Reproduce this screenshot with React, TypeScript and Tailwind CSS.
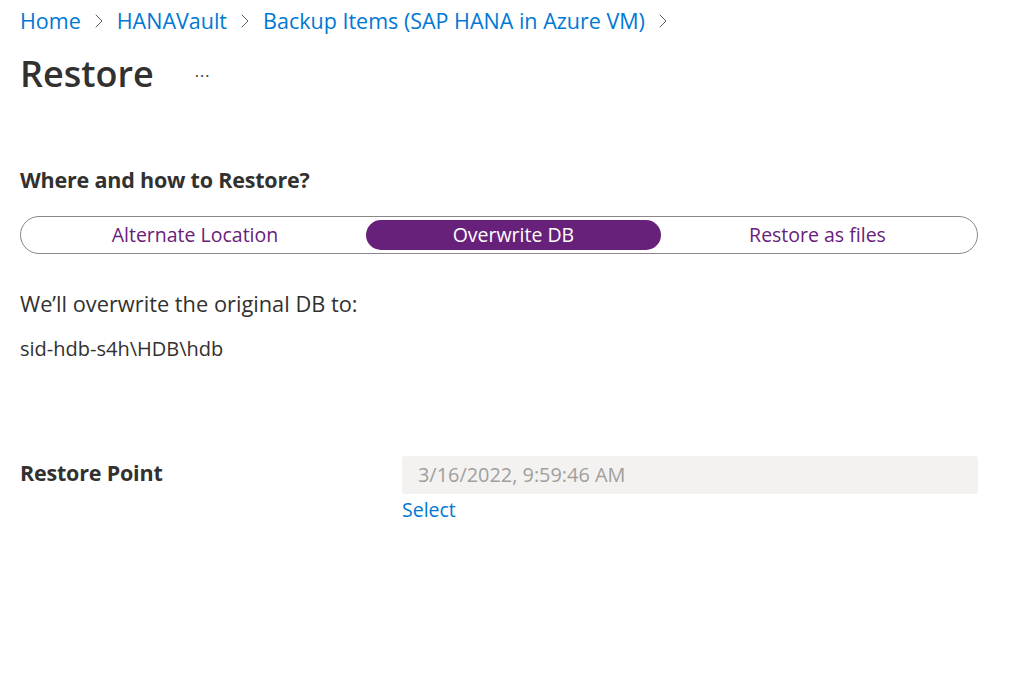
import { ChevronRight } from "lucide-react";

const crumbs = ["Home", "HANAVault", "Backup Items (SAP HANA in Azure VM)"];

const options = [
  { label: "Alternate Location", width: "w-[343px]", selected: false },
  { label: "Overwrite DB", width: "w-[296px]", selected: true },
  { label: "Restore as files", width: "w-[314px]", selected: false },
];

export default function App() {
  return (
    <div className="min-h-[686px] w-[1020px] bg-white font-['Open_Sans','Noto_Sans',sans-serif] text-[#323130]">
      <div className="pl-[20px] pt-[7px]">
        <nav className="flex h-[28px] items-center text-[21.5px] text-[#0078d4]">
          {crumbs.map((c) => (
            <div key={c} className="flex items-center">
              <a href="#">{c}</a>
              <ChevronRight className="mx-[6px] h-[24px] w-[24px] text-[#605e5c]" strokeWidth={1} />
            </div>
          ))}
        </nav>

        <div className="mt-[18px] flex items-center">
          <h1 className="text-[36px] font-semibold leading-[42px]">Restore</h1>
          <span className="ml-[41px] mt-[4px] text-[16px] leading-none tracking-[1px]">···</span>
        </div>
      </div>

      <div className="pl-[20px] pr-[42px]">
        <h2 className="mt-[73px] text-[21.5px] font-bold leading-[24px] tracking-[-0.2px]">
          Where and how to Restore?
        </h2>

        <div className="mt-[24px] flex h-[38px] w-[958px] items-center rounded-full border border-[#8a8886] px-[3px]">
          {options.map((o) => (
            <button
              key={o.label}
              className={`${o.width} flex h-[30px] items-center justify-center rounded-full text-[19.5px] ${
                o.selected ? "bg-[#68217a] text-white" : "text-[#68217a]"
              }`}
            >
              {o.label}
            </button>
          ))}
        </div>

        <p className="mt-[36px] text-[21.8px] leading-[28px]">We’ll overwrite the original DB to:</p>
        <p className="mt-[19px] text-[20px] leading-[24px]">sid-hdb-s4h\HDB\hdb</p>

        <div className="mt-[95px] flex">
          <div className="w-[386px] pt-[4px] text-[21.5px] font-bold leading-[26px] tracking-[-0.2px]">Restore Point</div>
          <div className="flex-1">
            <div className="flex h-[38px] w-[576px] items-center rounded-[3px] bg-[#f3f2f1] px-[16px] text-[19.9px] text-[#a19f9d]">
              3/16/2022, 9:59:46 AM
            </div>
            <a href="#" className="mt-[3px] block text-[19.5px] leading-[26px] text-[#0078d4]">
              Select
            </a>
          </div>
        </div>
      </div>
    </div>
  );
}
